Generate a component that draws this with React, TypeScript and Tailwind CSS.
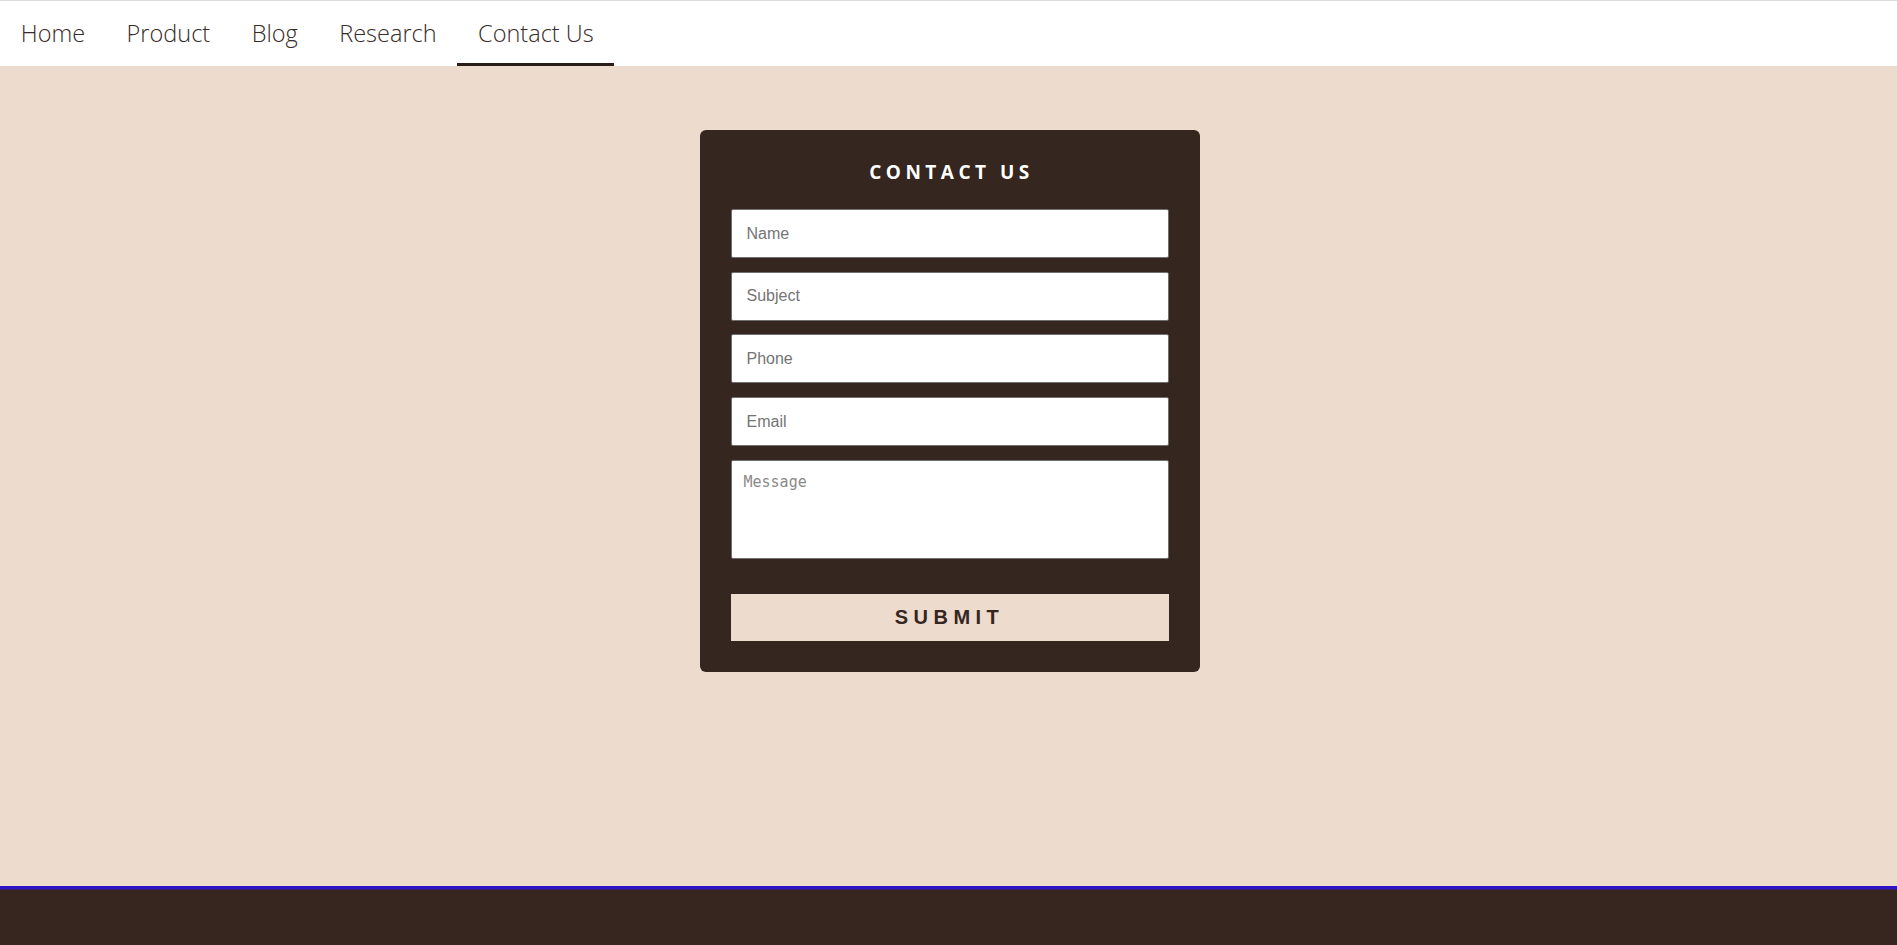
import React from "react";

export default function App() {
  const links = ["Home", "Product", "Blog", "Research", "Contact Us"];
  const fields = ["Name", "Subject", "Phone", "Email"];
  return (
    <div className="min-h-screen flex flex-col bg-[#eddccd]">
      <nav className="h-[66px] bg-white border-t border-[#dcdcdc] flex items-stretch">
        {links.map((l) => (
          <a
            key={l}
            className={
              "px-[20.75px] pt-[3px] flex items-center text-[23.5px] text-[#362b27] font-light border-b-[3px] " +
              (l === "Contact Us" ? "border-[#2a1c16]" : "border-transparent")
            }
            style={{ fontFamily: "'Open Sans', sans-serif" }}
          >
            {l}
          </a>
        ))}
      </nav>
      <main className="h-[820px] flex justify-center">
        <div className="mt-[64px] w-[500px] h-[542px] bg-[#35261f] rounded-[6px] px-[31px] pt-[29px] pb-[31px] flex flex-col translate-x-[1px]">
          <h2
            className="text-center text-white text-[19px] font-bold tracking-[4.5px] uppercase leading-[26px] pl-[4px]"
            style={{ fontFamily: "'Open Sans', sans-serif" }}
          >
            Contact Us
          </h2>
          <div className="mt-[24px] flex flex-col gap-[13.7px]">
            {fields.map((f) => (
              <input
                key={f}
                placeholder={f}
                className="h-[49px] w-full bg-white border border-[#707070] rounded-[2px] px-[15px] text-[16px] placeholder:text-[#757575] outline-none"
                style={{ fontFamily: "'Liberation Sans', Arial, sans-serif" }}
              />
            ))}
            <textarea
              placeholder="Message"
              className="h-[99px] w-full bg-white border border-[#707070] rounded-[2px] px-[12px] pt-[10px] text-[15px] placeholder:text-[#8a8a8a] outline-none resize-none"
              style={{ fontFamily: "'DejaVu Sans Mono', monospace" }}
            />
          </div>
          <button
            className="mt-[35px] h-[47px] w-full bg-[#eddccd] border-0 text-[#35261f] text-[20px] font-bold tracking-[5.5px] pl-0"
            style={{ fontFamily: "'Liberation Sans', Arial, sans-serif" }}
          >
            SUBMIT
          </button>
        </div>
      </main>
      <footer className="flex-1 min-h-[59px] bg-[#36261f] border-t-[3px] border-[#2e12c6]">
        <div className="h-px bg-[#3a1c6a]" />
      </footer>
    </div>
  );
}
